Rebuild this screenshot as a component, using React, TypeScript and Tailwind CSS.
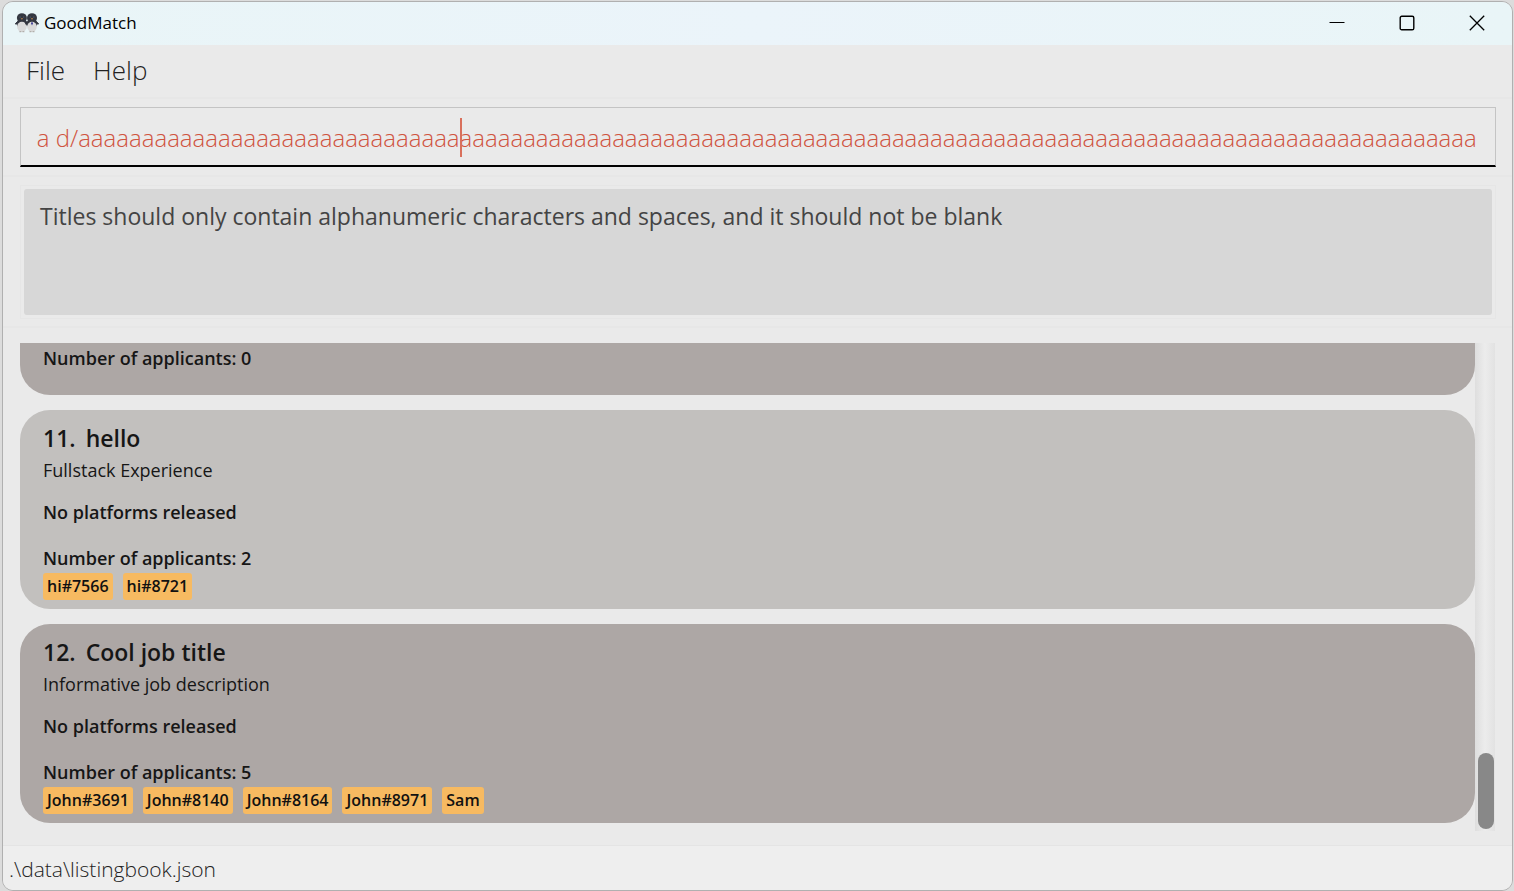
import { useLayoutEffect, useRef, useState } from "react";

type Listing = {
  index: number;
  title: string;
  description: string;
  applicants: string[];
};

const listings: Listing[] = [
  { index: 11, title: "hello", description: "Fullstack Experience", applicants: ["hi#7566", "hi#8721"] },
  {
    index: 12,
    title: "Cool job title",
    description: "Informative job description",
    applicants: ["John#3691", "John#8140", "John#8164", "John#8971", "Sam"],
  },
];

function Penguin({ x }: { x: number }) {
  return (
    <g transform={`translate(${x} 0)`}>
      <path d="M1.6 8.5-.6 11l2.6-.2M10.4 8.5l2.2 2.5-2.6-.2" fill="#30333d" stroke="#30333d" strokeWidth="1" />
      <ellipse cx="6" cy="5" rx="5" ry="4.8" fill="#343740" />
      <ellipse cx="6" cy="10.5" rx="5.2" ry="5" fill="#343740" />
      <ellipse cx="6" cy="13.8" rx="4.8" ry="5" fill="#dadada" />
      <circle cx="4.2" cy="4" r=".6" fill="#686c78" />
      <circle cx="7.8" cy="4" r=".6" fill="#686c78" />
      <path d="M4.8 5.2h2.4L6 6.8z" fill="#c58a4a" />
      <path d="M3.5 18.7h2M6.5 18.7h2" stroke="#a7a19c" strokeWidth="1" />
    </g>
  );
}

function TitleBar() {
  return (
    <header className="flex h-[43px] shrink-0 items-center bg-linear-to-r from-[#e9f5f7] via-[#ebf4fa] to-[#e9f5f7] pb-0.5 pl-3">
      <svg className="h-5 w-6" viewBox="0 0 24 20" aria-hidden="true">
        <Penguin x={0.9} />
        <Penguin x={11} />
        <path d="M17 9l-1 1 1 2.4 1-2.4z" fill="#2c2a8c" />
      </svg>
      <h1 className="ml-[5px] flex-1 text-[17px] leading-6 text-black">GoodMatch</h1>
      <button aria-label="Minimize" className="flex h-full w-[70px] items-center justify-center">
        <svg width="16" height="16" viewBox="0 0 16 16" fill="none" stroke="#000">
          <path d="M.5 7.5h15" />
        </svg>
      </button>
      <button aria-label="Maximize" className="flex h-full w-[70px] items-center justify-center">
        <svg width="16" height="16" viewBox="0 0 16 16" fill="none" stroke="#000" strokeWidth="1.4">
          <rect x="1.2" y="1.2" width="13.6" height="13.6" rx="1.6" />
        </svg>
      </button>
      <button aria-label="Close" className="flex h-full w-[70px] items-center justify-center">
        <svg width="16" height="16" viewBox="0 0 16 16" fill="none" stroke="#000" strokeWidth="1.3">
          <path d="M.8.8l14.4 14.4M15.2.8L.8 15.2" />
        </svg>
      </button>
    </header>
  );
}

function CommandBox() {
  const ref = useRef<HTMLInputElement>(null);
  const [command, setCommand] = useState("aa d/" + "a".repeat(110));

  useLayoutEffect(() => {
    const el = ref.current;
    if (!el) return;
    const toEnd = () => {
      el.scrollLeft = el.scrollWidth;
    };
    toEnd();
    document.fonts.ready.then(toEnd);
  }, []);

  return (
    <div className="relative">
      <input
        ref={ref}
        aria-label="Command"
        value={command}
        onChange={(e) => setCommand(e.target.value)}
        className="block h-[60px] w-full border border-b-2 border-[#c4c4c4] border-b-black bg-transparent pt-0.5 pr-[18px] pl-4 text-2xl font-light text-[#d0543f] outline-none"
      />
      <span className="absolute top-[11px] left-[440px] h-[39px] w-0.5 bg-[#d9705c]" />
    </div>
  );
}

function ApplicantCount({ count }: { count: number }) {
  return <p className="text-lg leading-6 font-semibold">Number of applicants: {count}</p>;
}

function ListingCard({ item }: { item: Listing }) {
  return (
    <li className="h-[199px] shrink-0 rounded-[30px] bg-[#c2c0be] px-[23px] pt-3 text-[#161616] odd:bg-[#ada7a5]">
      <h2 className="flex gap-2.5 text-[23px] leading-8 font-semibold">
        <span>{item.index}.</span>
        <span>{item.title}</span>
      </h2>
      <p className="text-lg leading-8">{item.description}</p>
      <p className="mt-3.5 text-lg leading-6 font-semibold">No platforms released</p>
      <div className="mt-[22px]">
        <ApplicantCount count={item.applicants.length} />
      </div>
      <ul className="mt-[3px] flex gap-2.5">
        {item.applicants.map((name) => (
          <li key={name} className="rounded-[3px] bg-[#f7ba61] px-1 text-base leading-[27px] font-semibold text-[#111]">
            {name}
          </li>
        ))}
      </ul>
    </li>
  );
}

export default function App() {
  return (
    <div className="min-h-screen bg-[#dcdcdc] pt-px pr-px pl-0.5 font-['Open_Sans','Noto_Sans',sans-serif]">
      <div className="flex h-[calc(100vh-1px)] flex-col overflow-hidden rounded-[11px] border border-[#b0b0b0] bg-[#eaeaea]">
        <TitleBar />
        <nav className="flex h-[54px] shrink-0 items-center gap-7 border-b-2 border-[#e7e7e7] pb-0.5 pl-[23px] text-[26px] font-light text-[#222]">
          <button>File</button>
          <button>Help</button>
        </nav>
        <section className="border-b-2 border-[#e7e7e7] pt-2 pr-4 pb-2 pl-[17px]">
          <CommandBox />
        </section>
        <section className="border-b-2 border-[#e7e7e7] pt-2 pr-4 pb-[7px] pl-[17px]">
          <div className="border border-[#e6e6e6] p-[3px]">
            <output className="block h-[126px] rounded-[3px] bg-[#d7d7d7] px-4 pt-1.5 text-[23px] leading-[42px] text-[#444]">
              Titles should only contain alphanumeric characters and spaces, and it should not be blank
            </output>
          </div>
        </section>
        <main className="flex min-h-0 flex-1 pt-[15px] pr-[17px] pb-3.5 pl-[17px]">
          <ul className="flex min-w-0 flex-1 flex-col gap-[15px] overflow-hidden">
            <li className="h-[52px] shrink-0 rounded-b-[30px] bg-[#ada7a5] px-[23px] pt-[3px] text-[#161616]">
              <ApplicantCount count={0} />
            </li>
            {listings.map((item) => (
              <ListingCard key={item.index} item={item} />
            ))}
          </ul>
          <div className="flex w-5 flex-col justify-end bg-linear-to-r from-[#dedede] via-[#ececec] to-[#e2e2e2] pr-px pb-0.5 pl-[3px]">
            <div className="h-[76px] rounded-full bg-[#888]" />
          </div>
        </main>
        <footer className="h-[45px] shrink-0 border-t border-[#e4e4e4] bg-[#eee] pl-1.5 text-[21px] leading-[46px] font-light text-[#222]">
          .\data\listingbook.json
        </footer>
      </div>
    </div>
  );
}
